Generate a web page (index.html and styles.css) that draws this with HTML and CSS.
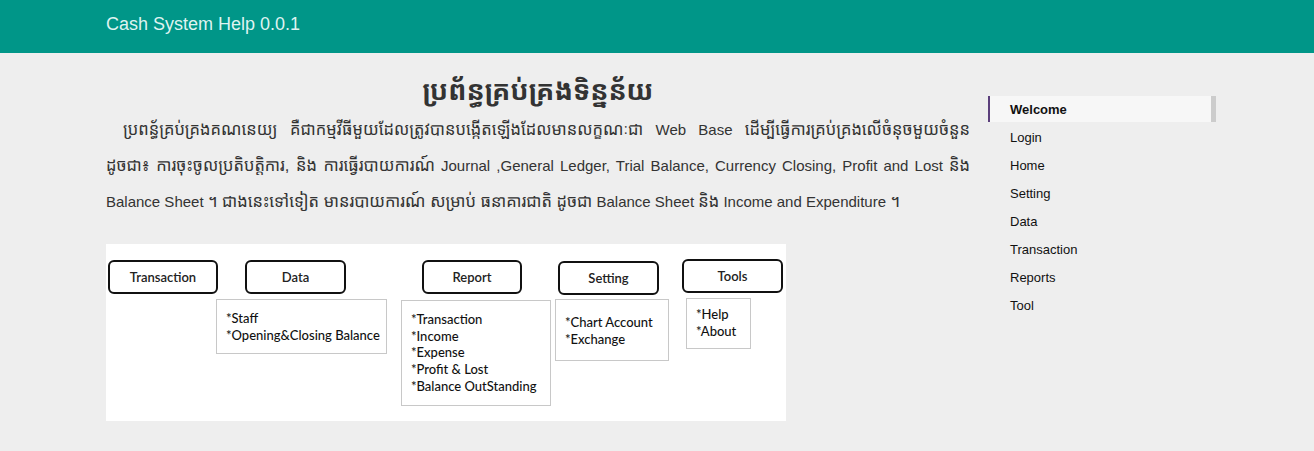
FILE: index.html
```html
<!DOCTYPE html>
<html lang="km">
<head>
<meta charset="utf-8">
<title>Cash System Help 0.0.1</title>
<link rel="stylesheet" href="styles.css">
</head>
<body>
<header class="topbar">
  <span class="brand">Cash System Help 0.0.1</span>
</header>
<div class="page">
  <main class="content">
    <h1 class="title">ប្រព័ន្ធគ្រប់គ្រងទិន្នន័យ</h1>
    <p class="intro"><span class="km">ប្រពន្ធ័គ្រប់គ្រងគណនេយ្យ  គឺជាកម្មវីធីមួយដែលត្រូវបានបង្កើតឡើងដែលមានលក្ខណៈជា</span> Web Base <span class="km">ដើម្បីធ្វើការគ្រប់គ្រងលើចំនុចមួយចំនួន ដូចជា៖ ការចុះចូលប្រតិបត្តិការ, និង ការធ្វើរបាយការណ៍</span> Journal ,General Ledger, Trial Balance, Currency Closing, Profit and Lost <span class="km">និង</span> Balance Sheet <span class="km">។ ជាងនេះទៅទៀត មានរបាយការណ៍ សម្រាប់ ធនាគារជាតិ ដូចជា</span> Balance Sheet <span class="km">និង</span> Income and Expenditure <span class="km">។</span></p>
    <div class="diagram">
      <div class="node n-trans">Transaction</div>
      <div class="node n-data">Data</div>
      <div class="node n-report">Report</div>
      <div class="node n-setting">Setting</div>
      <div class="node n-tools">Tools</div>
      <div class="list l-data">*Staff<br>*Opening&amp;Closing Balance</div>
      <div class="list l-report">*Transaction<br>*Income<br>*Expense<br>*Profit &amp; Lost<br>*Balance OutStanding</div>
      <div class="list l-setting">*Chart Account<br>*Exchange</div>
      <div class="list l-tools">*Help<br>*About</div>
    </div>
  </main>
  <nav class="sidebar">
    <a class="nav-item active">Welcome</a>
    <a class="nav-item">Login</a>
    <a class="nav-item">Home</a>
    <a class="nav-item">Setting</a>
    <a class="nav-item">Data</a>
    <a class="nav-item">Transaction</a>
    <a class="nav-item">Reports</a>
    <a class="nav-item">Tool</a>
  </nav>
</div>
</body>
</html>
```
FILE: styles.css
```css
html, body {
  margin: 0;
  padding: 0;
  background: #eeeeee;
  font-family: "Liberation Sans", Arial, "Noto Sans Khmer", "Khmer OS", sans-serif;
  color: #333;
}
.topbar {
  height: 53px;
  background: #009688;
  display: flex;
  align-items: center;
  padding-left: 106px;
  box-sizing: border-box;
}
.brand {
  color: #dff3f1;
  font-size: 18px;
  margin-top: -5px;
}
.page {
  display: flex;
  gap: 18px;
  padding: 18px 0 0 106px;
}
.content {
  width: 864px;
}
.title {
  margin: 0;
  text-align: center;
  font-size: 27px;
  font-weight: bold;
  line-height: 40px;
  height: 40px;
  color: #333;
}
.intro {
  margin: 1px 0 0;
  font-size: 15px;
  line-height: 36px;
  text-align: justify;
  text-indent: 17px;
  color: #333;
}
.km {
  font-size: 16.5px;
  line-height: 20px;
}
.diagram {
  position: relative;
  margin-top: 24px;
  width: 680px;
  height: 177px;
  background: #ffffff;
  font-family: Lato, "Open Sans", sans-serif;
  font-size: 13px;
  color: #111;
}
.node {
  position: absolute;
  height: 34px;
  box-sizing: border-box;
  border: 2px solid #111;
  border-radius: 6px;
  display: flex;
  align-items: center;
  justify-content: center;
  font-size: 13px;
  font-weight: 600;
  color: #222;
}
.n-trans { left: 2px; top: 16px; width: 110px; }
.n-data { left: 139px; top: 16px; width: 101px; }
.n-report { left: 316px; top: 16px; width: 100px; }
.n-setting { left: 452px; top: 17px; width: 101px; }
.n-tools { left: 576px; top: 15px; width: 101px; }
.list {
  position: absolute;
  box-sizing: border-box;
  border: 1px solid #c8c8c8;
  line-height: 16.7px;
  padding-left: 9px;
  font-weight: 500;
}
.l-data { left: 110px; top: 55px; width: 171px; height: 55px; padding-top: 10px; }
.l-report { left: 295px; top: 56px; width: 150px; height: 106px; padding-top: 10px; }
.l-setting { left: 449px; top: 55px; width: 114px; height: 62px; padding-top: 14px; }
.l-tools { left: 580px; top: 54px; width: 65px; height: 51px; padding-top: 7px; }
.sidebar {
  width: 228px;
  display: flex;
  flex-direction: column;
  padding-top: 25px;
}
.nav-item {
  display: block;
  height: 26px;
  line-height: 27px;
  margin-bottom: 2px;
  padding-left: 22px;
  font-size: 13px;
  color: #111;
  box-sizing: border-box;
}
.nav-item.active {
  font-weight: bold;
  background: #f7f7f7;
  border-left: 2px solid #5b3f7c;
  border-right: 5px solid #cccccc;
  padding-left: 20px;
}
```
